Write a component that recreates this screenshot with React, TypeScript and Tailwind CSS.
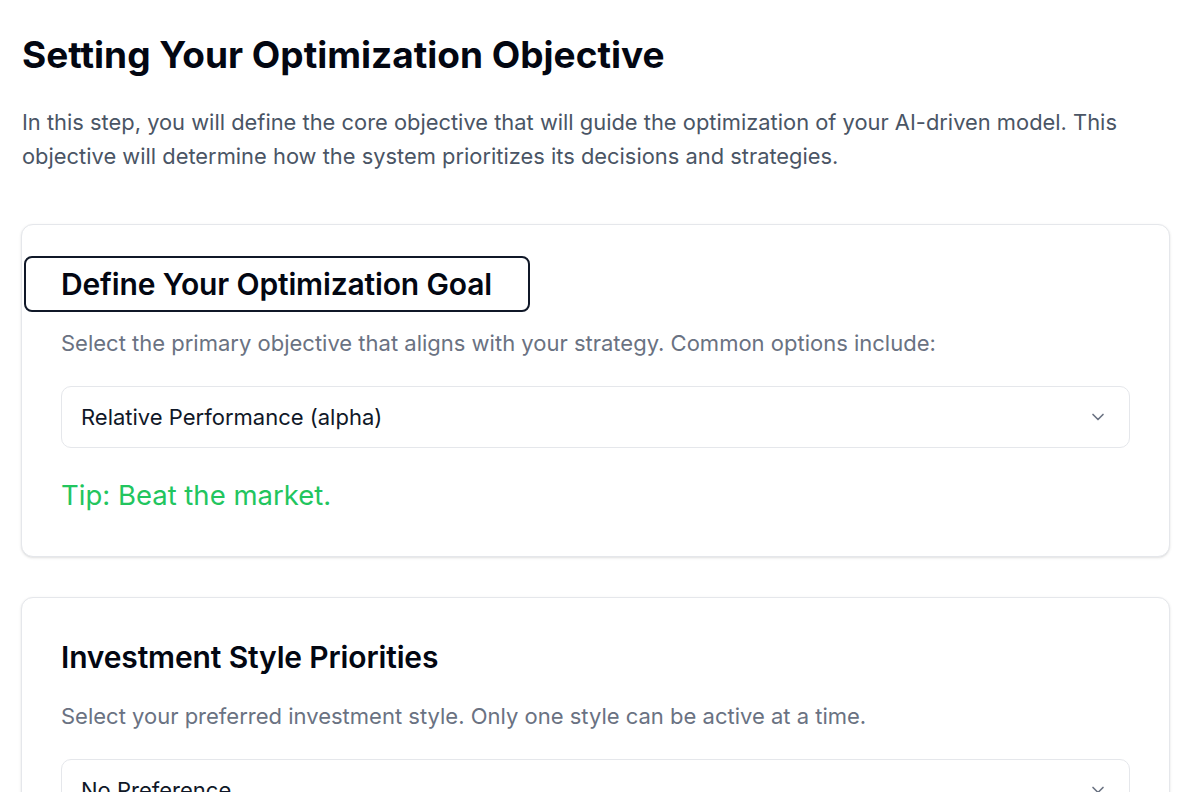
import { ChevronDown } from 'lucide-react'

function Picker({ value }: { value: string }) {
  return (
    <div className="mt-[28px] flex h-[62px] items-center justify-between rounded-[10px] border border-gray-200 bg-white pl-[19px] pr-[21px]">
      <span className="text-[22px] text-gray-900">{value}</span>
      <ChevronDown className="h-5 w-5 text-gray-500" strokeWidth={2} />
    </div>
  )
}

export default function App() {
  return (
    <div className="min-h-screen bg-white pl-[21px] pr-[24px] pt-[35px] pb-10 font-['Inter',sans-serif]">
      <h1 className="pl-px text-[37px] leading-[40px] font-bold text-gray-950">Setting Your Optimization Objective</h1>
      <p className="mt-[30px] pl-px text-[21.88px] leading-[34px] text-gray-600">
        In this step, you will define the core objective that will guide the optimization of your AI-driven model. This objective will determine how the system prioritizes its decisions and strategies.
      </p>

      <div className="mt-[51px] rounded-xl border border-gray-200 bg-white px-[39px] pt-[41px] pb-[43px] shadow-sm">
        <h2 className="-mx-[37px] -my-[10px] w-[506px] rounded-lg border-2 border-gray-900 px-[35px] py-[8px] text-[30px] leading-[36px] font-semibold tracking-[-0.005em] text-gray-950">
          Define Your Optimization Goal
        </h2>
        <p className="mt-[26px] text-[22px] leading-[30px] text-gray-500">
          Select the primary objective that aligns with your strategy. Common options include:
        </p>
        <Picker value="Relative Performance (alpha)" />
        <p className="mt-[29px] text-[27.5px] leading-[36px] text-[#22c55e]">Tip: Beat the market.</p>
      </div>

      <div className="mt-[40px] rounded-xl border border-gray-200 bg-white px-[39px] pt-[41px] pb-[43px] shadow-sm">
        <h2 className="text-[30px] leading-[36px] font-semibold tracking-[-0.005em] text-gray-950">Investment Style Priorities</h2>
        <p className="mt-[26px] text-[22px] leading-[30px] text-gray-500">
          Select your preferred investment style. Only one style can be active at a time.
        </p>
        <Picker value="No Preference" />
      </div>
    </div>
  )
}
